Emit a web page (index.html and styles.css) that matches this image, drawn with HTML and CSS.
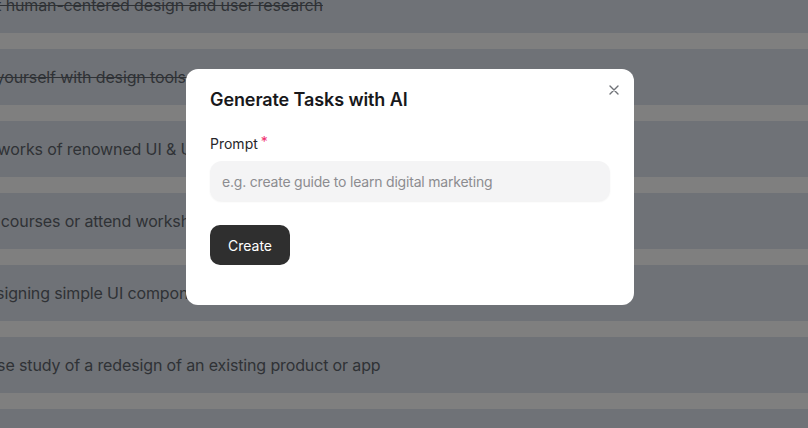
FILE: index.html
```html
<!DOCTYPE html>
<html lang="en">
<head>
<meta charset="utf-8">
<title>Generate Tasks with AI</title>
<link rel="stylesheet" href="styles.css">
</head>
<body>
  <ul class="task-list">
    <li class="task done">Learn about human-centered design and user research</li>
    <li class="task done">Familiarize yourself with design tools like Figma</li>
    <li class="task">Review the works of renowned UI &amp; UX designers</li>
    <li class="task">Take online courses or attend workshops</li>
    <li class="task">Practice designing simple UI components</li>
    <li class="task">Create a case study of a redesign of an existing product or app</li>
    <li class="task">Build a portfolio showcasing your work</li>
  </ul>

  <div class="overlay">
    <div class="modal" role="dialog" aria-labelledby="modal-title">
      <button class="close" aria-label="Close">
        <svg viewBox="0 0 10 10" width="10" height="10"><path d="M1 1L9 9M9 1L1 9" stroke="currentColor" stroke-width="1.4" stroke-linecap="round" fill="none"/></svg>
      </button>
      <h2 class="title" id="modal-title">Generate Tasks with AI</h2>
      <label class="label" for="prompt">Prompt<span class="req">*</span></label>
      <input class="input" id="prompt" type="text" placeholder="e.g. create guide to learn digital marketing">
      <div class="actions">
        <button class="btn">Create</button>
      </div>
    </div>
  </div>
</body>
</html>
```

FILE: styles.css
```css
* { box-sizing: border-box; }

html, body {
  margin: 0;
  padding: 0;
  height: 100%;
  overflow: hidden;
  background: #ffffff;
  font-family: Inter, "Noto Sans", sans-serif;
}

.task-list {
  list-style: none;
  margin: -23px 0 0 -104px;
  padding: 0;
  display: flex;
  flex-direction: column;
  gap: 16px;
}

.task {
  height: 56px;
  flex: none;
  display: flex;
  align-items: center;
  padding-left: 16px;
  background: #dee4ee;
  color: #5e646c;
  font-size: 16px;
  letter-spacing: -0.135px;
  white-space: nowrap;
}

.task.done {
  text-decoration: line-through;
}

.overlay {
  position: fixed;
  inset: 0;
  background: rgba(0, 0, 0, 0.5);
  display: flex;
  justify-content: center;
  align-items: flex-start;
  padding: 69px 0 0 12px;
}

.modal {
  position: relative;
  width: 448px;
  background: #ffffff;
  border-radius: 12px;
  padding: 17px 24px 40px;
  display: flex;
  flex-direction: column;
}

.close {
  position: absolute;
  top: 16px;
  right: 15px;
  width: 10px;
  height: 10px;
  padding: 0;
  border: 0;
  background: none;
  color: #6f7277;
  display: flex;
}

.title {
  margin: 0;
  font-size: 18px;
  line-height: 28px;
  font-weight: 600;
  color: #18181b;
  letter-spacing: -0.1px;
}

.label {
  margin-top: 20px;
  font-size: 14px;
  line-height: 20px;
  color: #27272a;
}

.req {
  color: #f0306e;
  margin-left: 3px;
  position: relative;
  top: -2px;
}

.input {
  margin-top: 7px;
  height: 40px;
  width: 100%;
  border: 0;
  border-radius: 12px;
  background: #f4f4f5;
  box-shadow: 0 1px 2px rgba(0, 0, 0, 0.06);
  padding: 0 12px;
  font-family: inherit;
  font-size: 14px;
  letter-spacing: -0.2px;
  color: #27272a;
  outline: none;
}

.input::placeholder {
  color: #8c8c90;
}

.actions {
  margin-top: 24px;
  display: flex;
}

.btn {
  width: 80px;
  height: 40px;
  border: 0;
  border-radius: 10px;
  background: #2f2f2f;
  color: #ffffff;
  font-family: inherit;
  font-size: 14px;
}
```
